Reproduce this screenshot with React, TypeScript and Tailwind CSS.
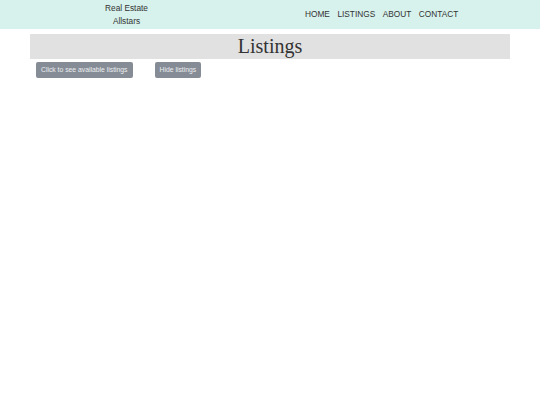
const navLinks = ["HOME", "LISTINGS", "ABOUT", "CONTACT"];

export default function App() {
  return (
    <div className="min-h-[405px] w-[540px] bg-white font-['Liberation_Sans',Arial,sans-serif] text-[#333]">
      {/* Header */}
      <header className="flex h-[29px] items-start bg-[#d7f1ec]">
        <div className="w-[253px] pt-[2px] text-center text-[8.3px] leading-[12.5px] text-[#333]">
          Real Estate
          <br />
          Allstars
        </div>
        <nav className="ml-[52px] flex gap-[7.5px] pt-[8px] text-[8.3px] leading-[12.5px] text-[#333]">
          {navLinks.map((link) => (
            <a key={link} href="#">
              {link}
            </a>
          ))}
        </nav>
      </header>

      {/* Listings */}
      <main className="mx-[30px] mt-[5px]">
        <div className="flex h-[25px] items-center justify-center bg-[#e1e1e1]">
          <h1 className="font-['Liberation_Serif','Times_New_Roman',serif] text-[20px] leading-[25px] text-[#333]">
            Listings
          </h1>
        </div>
        <div className="mt-[3px] flex">
          <button className="ml-[6px] h-[16px] rounded-[2px] bg-[#868c96] px-[5px] text-[6.8px] leading-[16px] text-[#eceef0]">
            Click to see available listings
          </button>
          <button className="ml-[22px] h-[16px] rounded-[2px] bg-[#868c96] px-[5px] text-[6.8px] leading-[16px] text-[#eceef0]">
            Hide listings
          </button>
        </div>
      </main>
    </div>
  );
}
